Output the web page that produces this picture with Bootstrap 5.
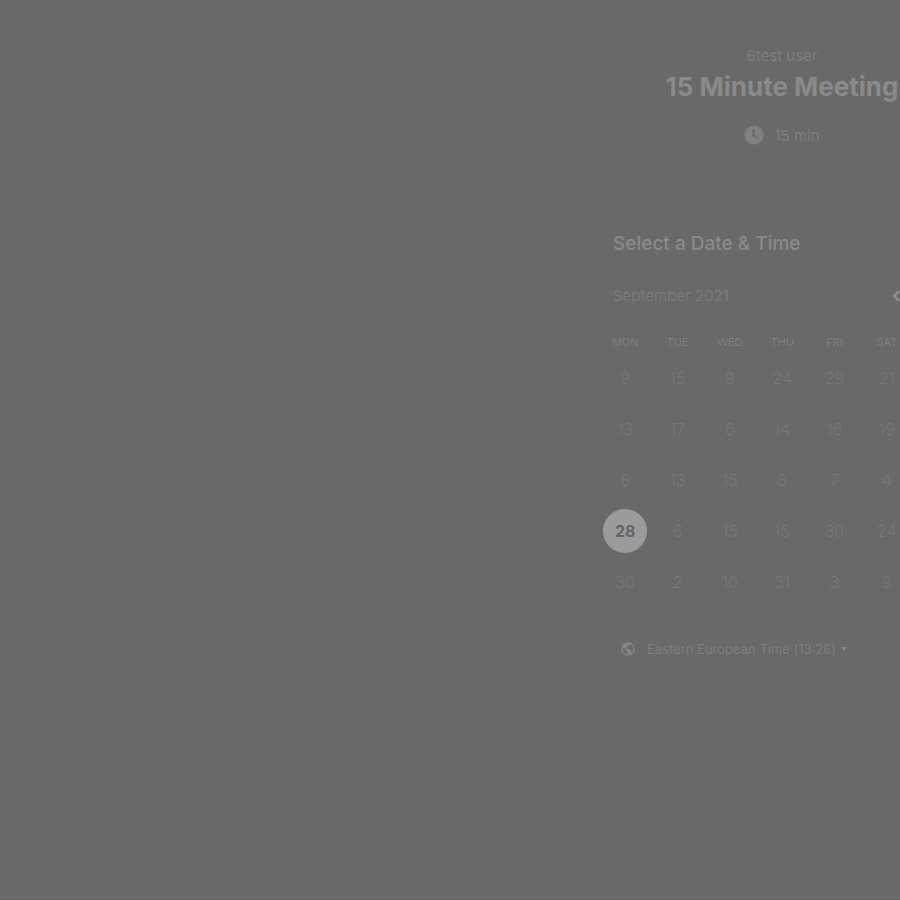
<!DOCTYPE html>
<html lang="en">
<head>
<meta charset="utf-8">
<meta name="viewport" content="width=device-width, initial-scale=1">
<title>15 Minute Meeting</title>
<link href="https://cdn.jsdelivr.net/npm/bootstrap@5.3.0/dist/css/bootstrap.min.css" rel="stylesheet">
<style>
body{background:#6a6a6a;color:#7e7e7e;font-family:Inter,"Open Sans",sans-serif;font-size:15px;line-height:20px}
.stage{min-height:100vh;padding:17px 0 0 442px;border-bottom:1px solid #666062}
.booking{width:680px;min-height:769px;background:#696969;border-radius:8px;padding-top:29px}
.title{font-size:26px;line-height:32px;font-weight:700;color:#8a8a8a;margin-top:5px}
.duration{margin-top:20px;height:24px;gap:10px}
.duration span{line-height:24px;padding-top:2px}
.picker{width:366px;margin-top:85px}
.picker-title{font-size:19px;line-height:24px;font-weight:500;color:#8a8a8a;padding-left:14px}
.month{margin-top:30px;padding:0 63px 0 14px;height:20px;color:#7a7a7a}
.days{width:314px;table-layout:fixed;margin-top:26px}
.days th{height:20px;font-size:11px;line-height:20px;font-weight:400;color:#7d7d7d}
.days td{height:51px}
.day{width:44px;height:44px;font-size:16px;font-weight:300;color:#767676}
.day.active{background:#9b9b9b;color:#666;font-weight:700}
.zone{margin:32px 0 0 22px;gap:12px}
.zone-btn{font-size:13px;line-height:20px;color:#7d7d7d;gap:5px}
</style>
<script src="https://cdn.jsdelivr.net/npm/bootstrap@5.3.0/dist/js/bootstrap.bundle.min.js"></script>
</head>
<body class="overflow-hidden">
<main class="stage overflow-hidden">
<section class="booking">
<header class="text-center">
<p class="mb-0">6test user</p>
<h1 class="title mb-0">15 Minute Meeting</h1>
<div class="duration d-flex justify-content-center align-items-center">
<svg width="20" height="20" viewBox="0 0 20 20" aria-hidden="true"><circle cx="10" cy="10" r="9.500" fill="#808080"/><path d="M9.500 4v6.500l4 2.500" fill="none" stroke="#696969" stroke-width="2"/></svg>
<span>15 min</span>
</div>
</header>
<div class="picker mx-auto">
<h2 class="picker-title mb-0">Select a Date &amp; Time</h2>
<div class="month d-flex justify-content-between align-items-center">
<span>September 2021</span>
<button type="button" class="btn p-0 border-0 d-flex" aria-label="Previous month"><svg width="11" height="12" viewBox="0 0 11 12" aria-hidden="true"><path d="M8 1 3 6l5 5" fill="none" stroke="#929292" stroke-width="2"/></svg></button>
</div>
<table class="days text-center align-middle">
<thead><tr><th class="p-0">MON</th><th class="p-0">TUE</th><th class="p-0">WED</th><th class="p-0">THU</th><th class="p-0">FRI</th><th class="p-0">SAT</th></tr></thead>
<tbody id="dates"></tbody>
</table>
<div class="zone d-flex align-items-center">
<svg width="14" height="14" viewBox="0 0 14 14" aria-hidden="true"><circle cx="7" cy="7" r="6.200" fill="none" stroke="#858585" stroke-width="1.200"/><path d="M5 1h4v2L7 4v1H5v2h4l1 1v2l2 1-2 2-1-1-2 1V11L5 9V8L1 5l1-3z" fill="#858585"/></svg>
<button type="button" class="zone-btn btn p-0 border-0 d-flex align-items-center"><span>Eastern European Time (13:26)</span><svg width="6" height="4" viewBox="0 0 6 4" aria-hidden="true"><path d="M0 0h6L3 4z" fill="#8a8a8a"/></svg></button>
</div>
</div>
</section>
</main>
<script>
const weeks = [[9,15,9,24,29,21],[13,17,6,14,16,19],[6,13,15,8,7,4],[28,6,15,15,30,24],[30,2,10,31,3,9]];
document.getElementById("dates").innerHTML = weeks.map(week => "<tr>" + week.map(day =>
  `<td class="p-0"><button type="button" class="day rounded-circle border-0 p-0 ${day === 28 ? "active" : "bg-transparent"}">${day}</button></td>`).join("") + "</tr>").join("");
</script>
</body>
</html>
